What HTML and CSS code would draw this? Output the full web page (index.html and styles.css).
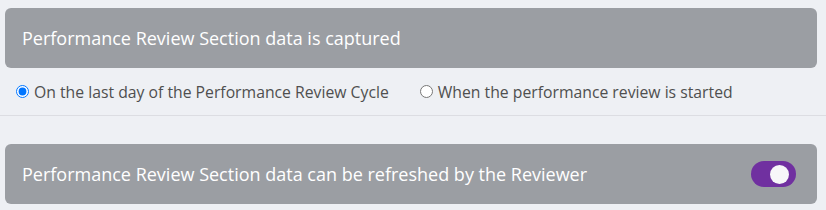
FILE: index.html
```html
<!DOCTYPE html>
<html lang="en">
<head>
    <meta charset="UTF-8">
    <title>Review Settings</title>
    <link rel="stylesheet" href="styles.css">
</head>
<body>
    <section class="setting">
        <header class="setting-header">
            <h2>Performance Review Section data is captured</h2>
        </header>
        <div class="radio-row">
            <label class="radio-option">
                <input type="radio" name="capture" checked>
                <span>On the last day of the Performance Review Cycle</span>
            </label>
            <label class="radio-option">
                <input type="radio" name="capture">
                <span>When the performance review is started</span>
            </label>
        </div>
    </section>

    <section class="setting">
        <header class="setting-header">
            <h2>Performance Review Section data can be refreshed by the Reviewer</h2>
            <label class="toggle">
                <input type="checkbox" checked>
                <span class="toggle-track"><span class="toggle-knob"></span></span>
            </label>
        </header>
    </section>
</body>
</html>
```
FILE: styles.css
```css
:root {
    --page-bg: #eef0f4;
    --header-bg: #9b9ea3;
    --divider: #dcdde2;
    --label-color: #4f4f4f;
    --toggle-on: #7030a0;
}

body {
    margin: 0;
    background-color: var(--page-bg);
    font-family: "Open Sans", "Noto Sans", Arial, sans-serif;
    width: 826px;
    height: 210px;
    overflow: hidden;
}

.setting {
    padding-top: 8px;
}
.setting + .setting {
    padding-top: 28px;
}

.setting-header {
    display: flex;
    align-items: center;
    justify-content: space-between;
    height: 60px;
    margin: 0 9px 0 5px;
    padding: 0 21px 0 17px;
    background-color: var(--header-bg);
    border-radius: 6px;
    box-sizing: border-box;
}
.setting-header h2 {
    margin: 0;
    font-size: 18px;
    font-weight: 400;
    color: #ffffff;
}

/* Radios */
.radio-row {
    display: flex;
    align-items: center;
    height: 47px;
    padding-left: 16px;
    border-bottom: 1px solid var(--divider);
}
.radio-option {
    display: flex;
    align-items: center;
    gap: 5px;
    font-size: 15.75px;
    color: var(--label-color);
    margin-right: 31px;
}
.radio-option input {
    margin: 0;
    width: 13px;
    height: 13px;
    accent-color: #0075ff;
}

/* Toggle */
.toggle input { display: none; }
.toggle-track {
    display: flex;
    align-items: center;
    width: 45px;
    height: 26px;
    padding: 0 7px;
    box-sizing: border-box;
    border-radius: 13px;
    background-color: var(--toggle-on);
    justify-content: flex-end;
}
.toggle-knob {
    width: 19px;
    height: 19px;
    border-radius: 50%;
    background-color: #f7f7f9;
}
```
